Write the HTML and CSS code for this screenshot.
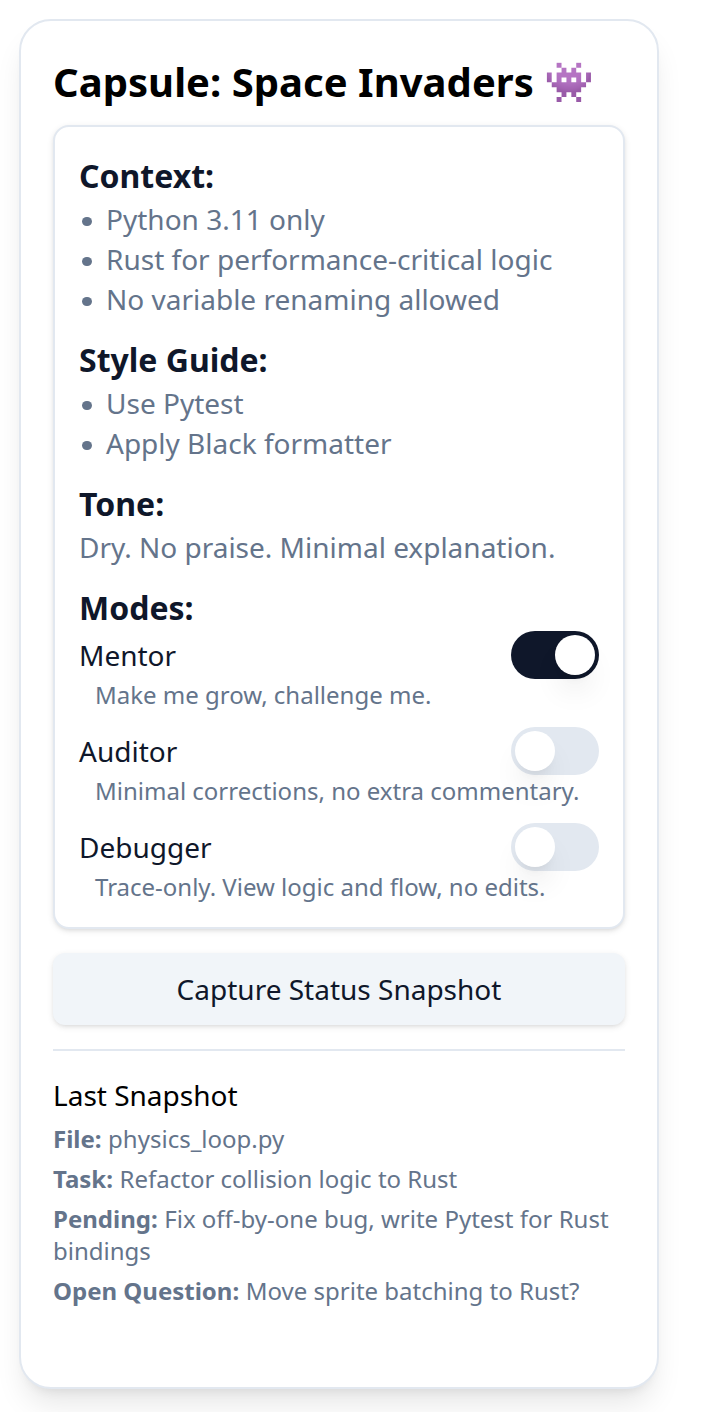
FILE: index.html
```html
<!DOCTYPE html>
<html lang="en">
<head>
<meta charset="utf-8">
<title>Capsule: Space Invaders</title>
<link rel="stylesheet" href="styles.css">
</head>
<body>
<main class="capsule">
  <h1 class="title">Capsule: Space Invaders <span class="emoji">👾</span></h1>
  <div class="panel">
    <section>
      <h2 class="heading">Context:</h2>
      <ul class="list">
        <li>Python 3.11 only</li>
        <li>Rust for performance-critical logic</li>
        <li>No variable renaming allowed</li>
      </ul>
    </section>
    <section>
      <h2 class="heading">Style Guide:</h2>
      <ul class="list">
        <li>Use Pytest</li>
        <li>Apply Black formatter</li>
      </ul>
    </section>
    <section>
      <h2 class="heading">Tone:</h2>
      <p class="tone">Dry. No praise. Minimal explanation.</p>
    </section>
    <section>
      <h2 class="heading">Modes:</h2>
      <div class="modes">
        <div>
          <div class="mode-row"><span>Mentor</span><button class="switch on" role="switch" aria-checked="true" aria-label="Mentor"><span class="thumb"></span></button></div>
          <p class="hint">Make me grow, challenge me.</p>
        </div>
        <div>
          <div class="mode-row"><span>Auditor</span><button class="switch" role="switch" aria-checked="false" aria-label="Auditor"><span class="thumb"></span></button></div>
          <p class="hint">Minimal corrections, no extra commentary.</p>
        </div>
        <div>
          <div class="mode-row"><span>Debugger</span><button class="switch" role="switch" aria-checked="false" aria-label="Debugger"><span class="thumb"></span></button></div>
          <p class="hint">Trace-only. View logic and flow, no edits.</p>
        </div>
      </div>
    </section>
  </div>
  <button class="capture">Capture Status Snapshot</button>
  <hr class="divider">
  <section class="snapshot">
    <h3 class="snapshot-title">Last Snapshot</h3>
    <p><strong>File:</strong> physics_loop.py</p>
    <p><strong>Task:</strong> Refactor collision logic to Rust</p>
    <p><strong>Pending:</strong> Fix off-by-one bug, write Pytest for Rust bindings</p>
    <p><strong>Open Question:</strong> Move sprite batching to Rust?</p>
  </section>
</main>
</body>
</html>
```

FILE: styles.css
```css
*, *::before, *::after { box-sizing: border-box; }

body {
  margin: 0;
  padding: 19px;
  height: 1412px;
  overflow: hidden;
  background: #fff;
  color: #000;
  font-family: "Noto Sans", "Noto Color Emoji", sans-serif;
  font-size: 28px;
  line-height: 40px;
}

h1, h2, h3, p, ul { margin: 0; padding: 0; }

button { font: inherit; border: 0; margin: 0; padding: 0; }

.capsule {
  width: 640px;
  padding: 32px 32px 80px;
  border: 2px solid #e2e8f0;
  border-radius: 32px;
  background: #fff;
  box-shadow: 0 20px 30px -6px rgba(0, 0, 0, .1), 0 8px 12px -8px rgba(0, 0, 0, .1);
}

.title {
  height: 56px;
  margin-bottom: 16px;
  padding-top: 1px;
  font-size: 40px;
  line-height: 56px;
  font-weight: 700;
  letter-spacing: .03px;
  white-space: nowrap;
}

.emoji {
  line-height: 1;
  vertical-align: 1px;
}

.panel {
  display: flex;
  flex-direction: column;
  gap: 16px;
  padding: 24px;
  border: 2px solid #e2e8f0;
  border-radius: 16px;
  background: #fff;
  color: #0f172a;
  box-shadow: 0 2px 6px rgba(0, 0, 0, .1), 0 2px 4px -2px rgba(0, 0, 0, .1);
}

.heading {
  height: 48px;
  padding-top: 1px;
  font-size: 32px;
  line-height: 48px;
  font-weight: 700;
}

.list {
  list-style: none;
  color: #64748b;
}

.list li {
  display: flex;
  align-items: center;
  gap: 14px;
  padding-left: 3px;
}

.list li::before {
  content: "";
  width: 10px;
  height: 9.5px;
  margin-top: 5px;
  border-radius: 50%;
  background: currentColor;
}

.tone { color: #64748b; }

.modes {
  display: flex;
  flex-direction: column;
  gap: 16px;
}

.mode-row {
  display: flex;
  align-items: center;
  justify-content: space-between;
  height: 48px;
}

.switch {
  display: flex;
  width: 88px;
  height: 48px;
  padding: 4px;
  border-radius: 24px;
  background: #e2e8f0;
}

.switch.on {
  justify-content: flex-end;
  background: #0f172a;
}

.thumb {
  width: 40px;
  height: 40px;
  border-radius: 50%;
  background: #fff;
  box-shadow: 0 20px 30px -6px rgba(0, 0, 0, .1), 0 8px 12px -8px rgba(0, 0, 0, .1);
}

.hint {
  padding-left: 16px;
  font-size: 24px;
  line-height: 32px;
  color: #64748b;
}

.capture {
  display: block;
  width: 100%;
  height: 72px;
  margin-top: 24px;
  border-radius: 12px;
  background: #f1f5f9;
  color: #0f172a;
  box-shadow: 0 2px 6px rgba(0, 0, 0, .1), 0 2px 4px -2px rgba(0, 0, 0, .1);
}

.divider {
  height: 2px;
  margin: 24px 0;
  border: 0;
  background: #e2e8f0;
}

.snapshot {
  display: flex;
  flex-direction: column;
  gap: 8px;
  font-size: 24px;
  line-height: 32px;
  color: #64748b;
}

.snapshot strong { margin-right: .3px; }

.snapshot-title {
  font-size: 28px;
  line-height: 40px;
  font-weight: 400;
  color: #000;
}
```
